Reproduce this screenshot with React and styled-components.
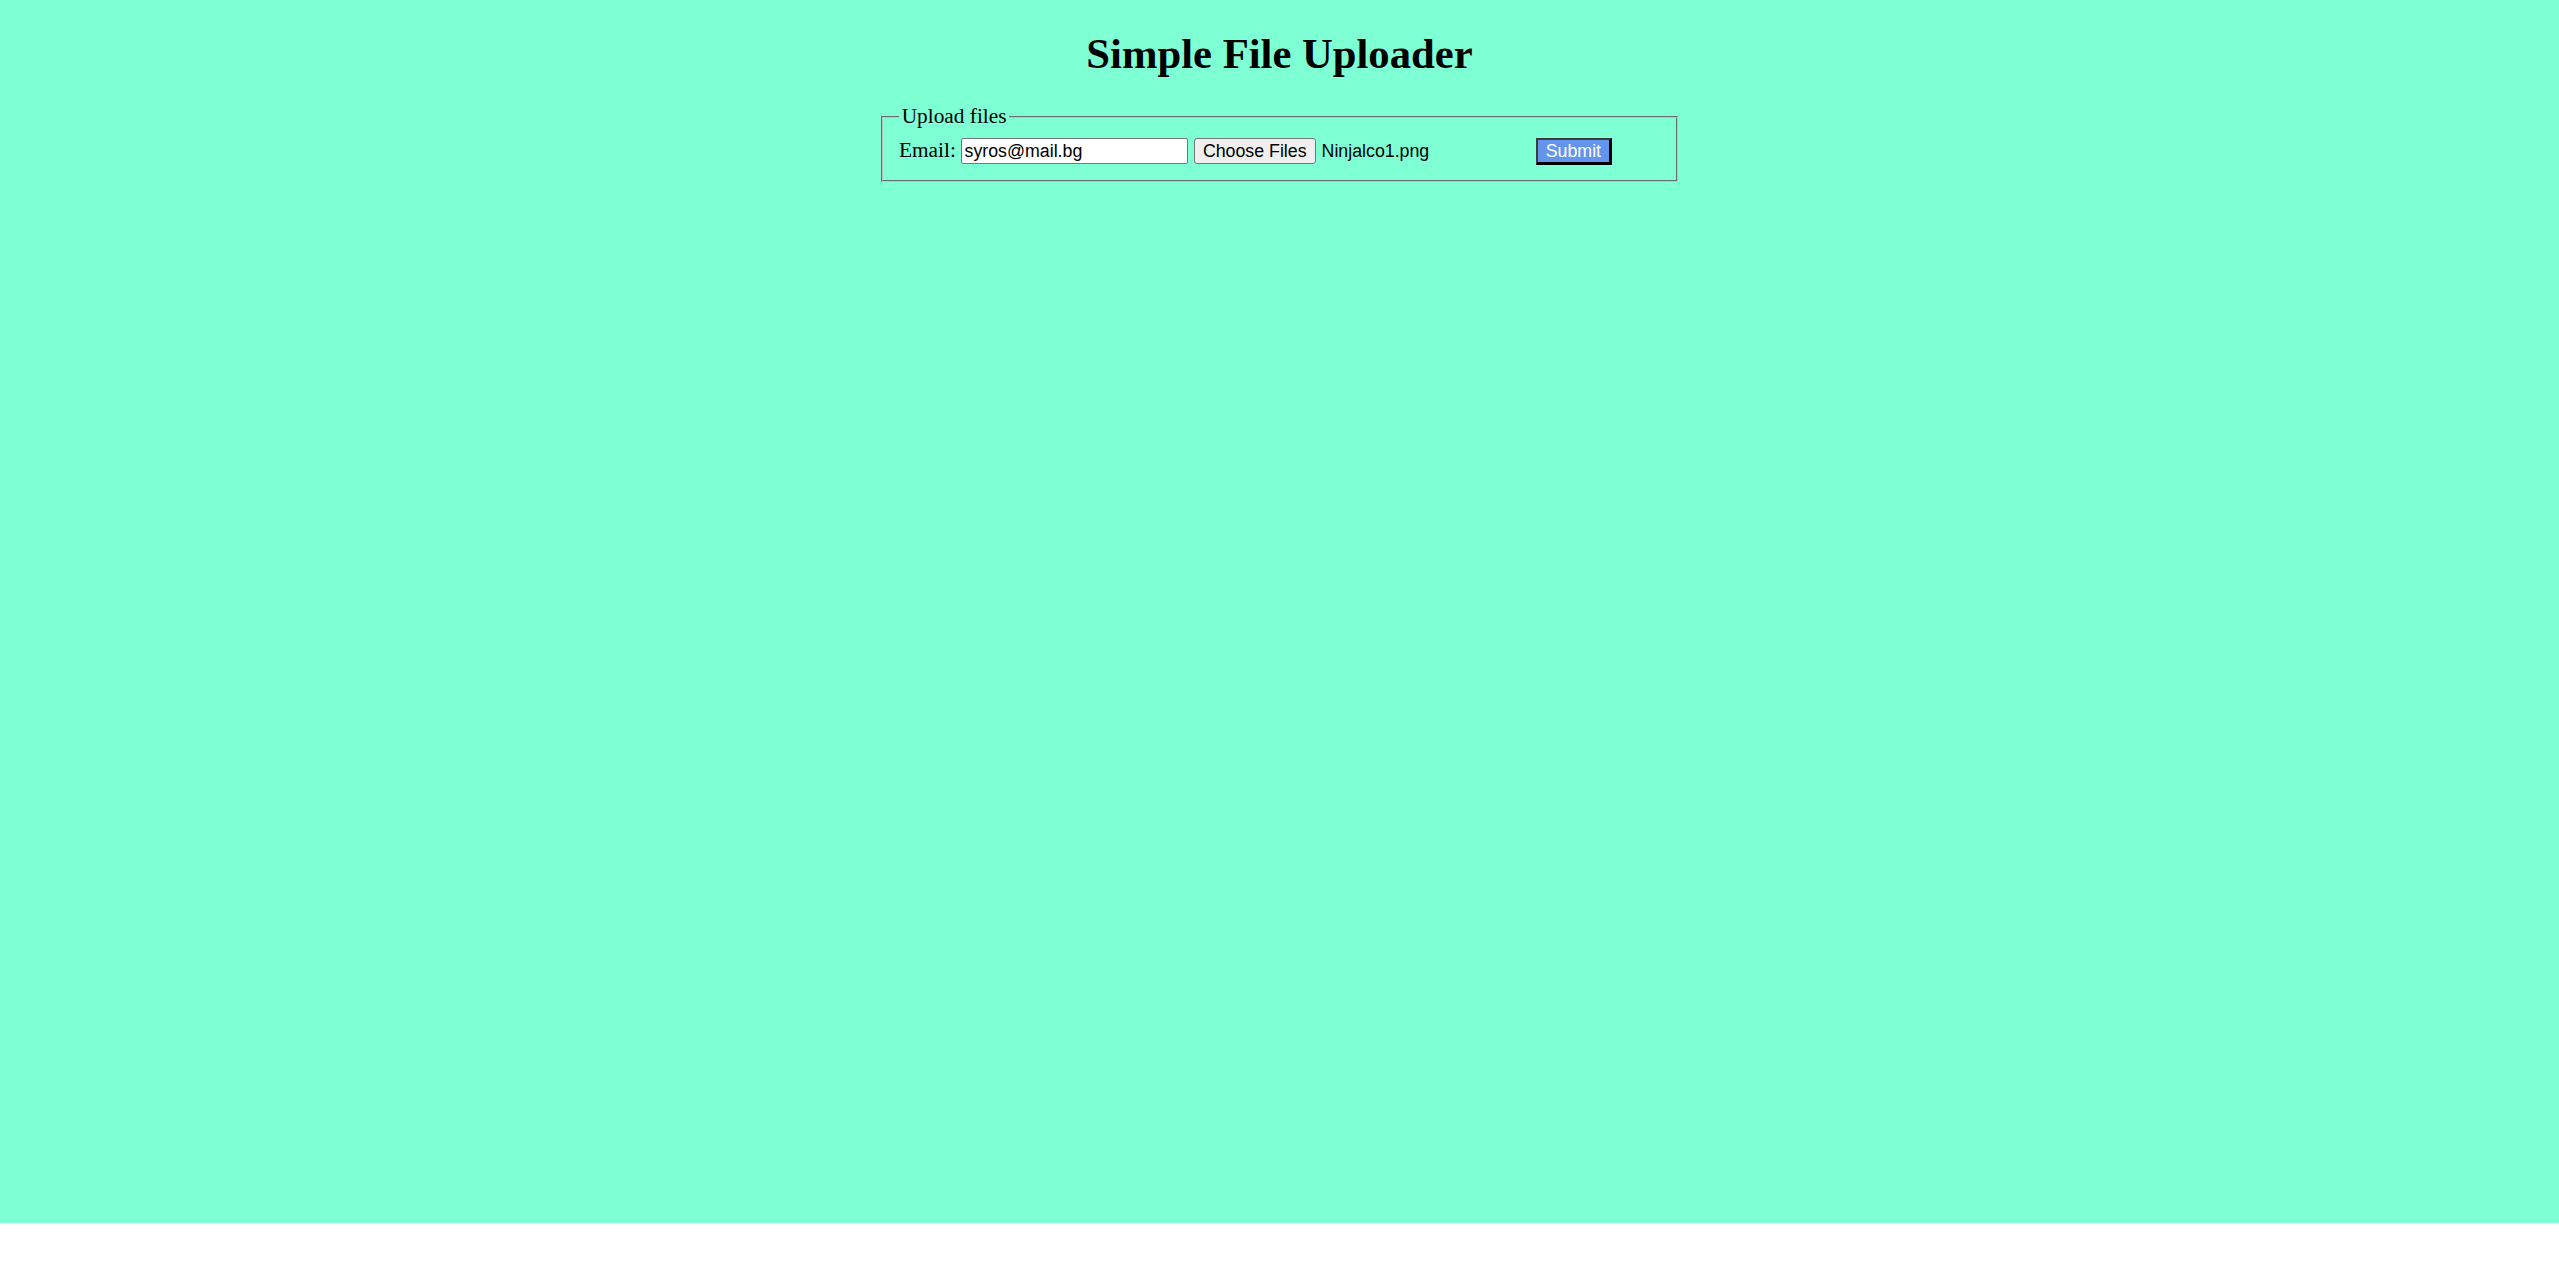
import React from "react";
import styled, { createGlobalStyle } from "styled-components";

const GlobalStyle = createGlobalStyle`
  html {
    background: #ffffff;
  }

  body {
    margin: 0;
    font-family: "Liberation Serif", "Times New Roman", serif;
    font-size: 21.33px;
  }
`;

export default function App() {
  return (
    <>
      <GlobalStyle />
      <Page>
        <Title>Simple File Uploader</Title>
        <form onSubmit={(e) => e.preventDefault()}>
          <UploadBox>
            <Legend>Upload files</Legend>
            <Row>
              <Label htmlFor="email">Email:</Label>
              <EmailInput id="email" type="email" defaultValue="syros@mail.bg" />
              <FilePicker>
                <ChooseButton type="button">Choose Files</ChooseButton>
                <FileName>Ninjalco1.png</FileName>
              </FilePicker>
              <SubmitButton type="submit">Submit</SubmitButton>
            </Row>
          </UploadBox>
        </form>
      </Page>
    </>
  );
}

const Page = styled.div`
  height: 1223px;
  background-color: aquamarine;
  overflow: hidden;
`;

const Title = styled.h1`
  margin: 28.6px 0 26.6px;
  text-align: center;
  font-size: 42.67px;
  font-weight: bold;
  line-height: normal;
`;

const UploadBox = styled.fieldset`
  width: 761px;
  margin: 0 auto;
  padding: 8.5px 16px 15px;
  border: 2px groove #c0c0c0;
`;

const Legend = styled.legend`
  padding: 0 2.67px;
`;

const Row = styled.div`
  display: flex;
  align-items: baseline;
`;

const Label = styled.label`
  margin-right: 5px;
`;

const EmailInput = styled.input`
  box-sizing: border-box;
  width: 227px;
  height: 26px;
  padding: 1px 2.67px;
  border: 1px solid #767676;
  border-radius: 2px;
  background: #ffffff;
  font-family: "Liberation Sans", Arial, sans-serif;
  font-size: 17.78px;
  color: #000000;
  outline: none;
`;

const FilePicker = styled.div`
  display: flex;
  align-items: baseline;
  width: 337px;
  margin-left: 6px;
`;

const ChooseButton = styled.button`
  box-sizing: border-box;
  height: 26px;
  padding: 1px 8px;
  border: 1px solid #767676;
  border-radius: 3px;
  background: #efefef;
  font-family: "Liberation Sans", Arial, sans-serif;
  font-size: 17.78px;
  color: #000000;
`;

const FileName = styled.span`
  margin-left: 6px;
  font-family: "Liberation Sans", Arial, sans-serif;
  font-size: 17.78px;
`;

const SubmitButton = styled.button`
  box-sizing: border-box;
  width: 76px;
  height: 27px;
  margin-left: 5px;
  padding: 1px 6px;
  border-style: solid;
  border-width: 2px 3px 3px 2px;
  border-color: #3c3c3c #000000 #000000 #3c3c3c;
  background: #6495ed;
  font-family: "Liberation Sans", Arial, sans-serif;
  font-size: 17.78px;
  color: #ffffff;
`;
